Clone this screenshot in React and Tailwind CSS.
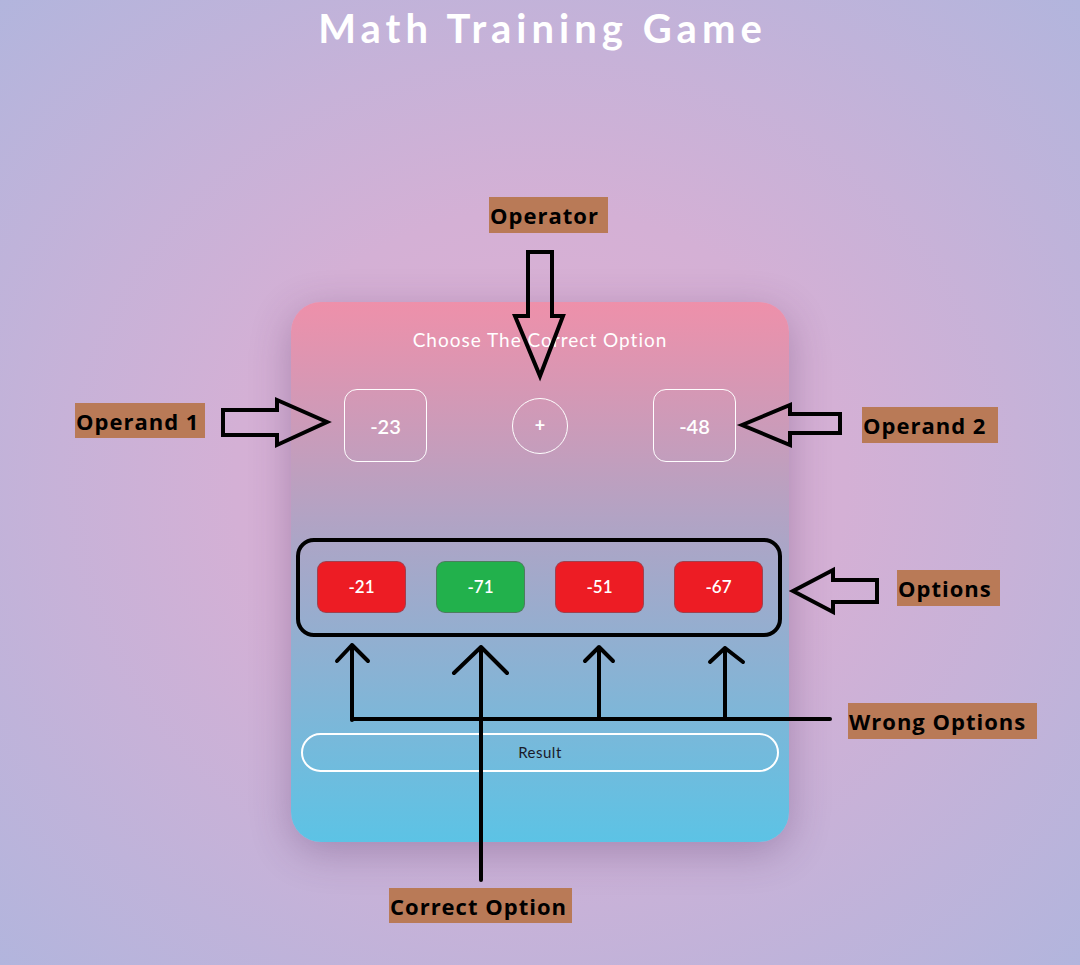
import React from "react";

const Label = ({ children, className }) => (
  <div
    className={`absolute bg-[#b97a57] text-black font-bold text-[22px] leading-none tracking-[1px] flex items-center pl-[1px] whitespace-nowrap ${className}`}
    style={{ fontFamily: "'Open Sans', Lato, sans-serif" }}
  >
    {children}
  </div>
);

export default function App() {
  const options = [
    { v: "-21", bg: "bg-[#ed1c24]" },
    { v: "-71", bg: "bg-[#22b14c]" },
    { v: "-51", bg: "bg-[#ed1c24]" },
    { v: "-67", bg: "bg-[#ed1c24]" },
  ];
  return (
    <div
      className="relative w-full min-h-screen h-[965px] overflow-hidden bg-[radial-gradient(ellipse_at_center,#dfb0d3_0%,#d4b0d5_40%,#b2b5dd_100%)] flex flex-col items-center"
      style={{ fontFamily: "Lato, 'Noto Sans', sans-serif" }}
    >
      <h1 className="text-white font-bold text-[40px] leading-[56px] tracking-[5px] h-[56px] pl-[5px]">
        Math Training Game
      </h1>

      <div className="mt-[246px] w-[498px] h-[540px] rounded-[30px] bg-[linear-gradient(to_bottom,#ee90aa_0%,#b2a3c4_40%,#5cc3e5_100%)] shadow-[0_10px_40px_rgba(70,40,90,0.3)] flex flex-col items-center pt-[26px]">
        <div className="text-white text-[19px] leading-[24px] tracking-[1px]">
          Choose The Correct Option
        </div>
        <div className="mt-[37px] flex items-center gap-[85px]">
          <div className="w-[83px] h-[73px] rounded-[13px] border border-white flex items-center justify-center text-white text-[20px] font-semibold">
            -23
          </div>
          <div className="w-[56px] h-[56px] rounded-full border border-white flex items-center justify-center text-white text-[18px] font-bold">
            +
          </div>
          <div className="w-[83px] h-[73px] rounded-[13px] border border-white flex items-center justify-center text-white text-[20px] font-semibold">
            -48
          </div>
        </div>
        <div className="mt-[99px] flex gap-[30px]">
          {options.map((o) => (
            <div
              key={o.v}
              className={`w-[89px] h-[52px] rounded-[9px] border border-[#6b5a6a]/60 ${o.bg} flex items-center justify-center text-white text-[17px] font-semibold`}
            >
              {o.v}
            </div>
          ))}
        </div>
        <div className="mt-[120px] w-[478px] h-[39px] rounded-full border-2 border-white flex items-center justify-center text-[#1a1a2a] text-[15px] tracking-[0.5px]">
          Result
        </div>
      </div>

      <svg
        className="absolute left-0 top-0 pointer-events-none"
        width="1080"
        height="965"
        viewBox="0 0 1080 965"
        fill="none"
        stroke="black"
        strokeWidth="4"
      >
        <polygon points="528,252 552,252 552,316 563,316 540,376 515,316 528,316" />
        <polygon points="223,410 277,410 277,400 327,422 277,445 277,435 223,435" />
        <polygon points="742,425 790,405 790,414 840,414 840,433 790,433 790,445" />
        <polygon points="793,591 833,570 833,580 877,580 877,602 833,602 833,612" />
        <rect x="298" y="540" width="482" height="95" rx="16" />
        <g strokeLinecap="round" strokeLinejoin="round">
          <path d="M352 720 V645 M337 661 L352 645 L368 661" />
          <path d="M481 880 V647 M454 673 L481 647 L507 673" />
          <path d="M599 719 V647 M585 661 L599 647 L613 661" />
          <path d="M725 719 V648 M710 662 L725 648 L743 662" />
          <path d="M352 719 H830" />
        </g>
      </svg>

      <Label className="left-[489px] top-[197px] w-[119px] h-[36px]">Operator</Label>
      <Label className="left-[75px] top-[403px] w-[130px] h-[35px]">Operand 1</Label>
      <Label className="left-[862px] top-[407px] w-[136px] h-[36px]">Operand 2</Label>
      <Label className="left-[897px] top-[570px] w-[103px] h-[36px]">Options</Label>
      <Label className="left-[848px] top-[703px] w-[189px] h-[36px]">Wrong Options</Label>
      <Label className="left-[389px] top-[888px] w-[183px] h-[35px]">Correct Option</Label>
    </div>
  );
}
